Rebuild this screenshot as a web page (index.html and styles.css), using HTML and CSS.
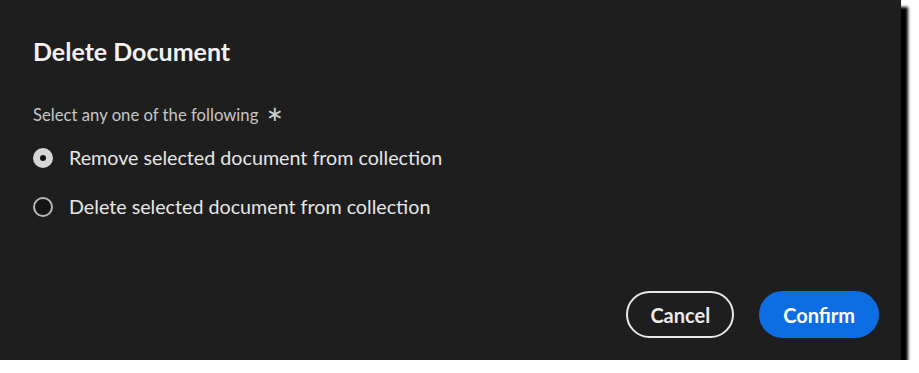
FILE: index.html
```html
<!DOCTYPE html>
<html lang="en">
  <head>
    <meta charset="UTF-8" />
    <meta name="viewport" content="width=device-width, initial-scale=1.0" />
    <title>Delete Document</title>
    <link rel="stylesheet" href="styles.css">
  </head>
  <body>
    <div class="dialog">
      <h2 class="heading">Delete Document</h2>

      <div class="field">
        <div class="label">Select any one of the following <span class="req">∗</span></div>
        <label class="radio">
          <span class="circle checked"></span>
          <span>Remove selected document from collection</span>
        </label>
        <label class="radio">
          <span class="circle"></span>
          <span>Delete selected document from collection</span>
        </label>
      </div>

      <div class="buttons">
        <button class="btn secondary">Cancel</button>
        <button class="btn primary">Confirm</button>
      </div>
    </div>
  </body>
</html>
```

FILE: styles.css
```css
body {
  margin: 0;
  background-color: #ffffff;
  font-family: Lato, "Noto Sans", Arial, sans-serif;
}

.dialog {
  width: 901px;
  height: 360px;
  box-sizing: border-box;
  padding: 35px 22px 22px 33px;
  background-color: #1e1e1e;
  color: #ebebeb;
  box-shadow: 7px 7px 3px #000000;
  display: flex;
  flex-direction: column;
}

.heading {
  margin: 0;
  font-size: 25px;
  font-weight: 700;
  line-height: 32px;
  color: #f2f2f2;
}

.field {
  margin-top: 36px;
  display: flex;
  flex-direction: column;
}

.label {
  font-size: 16.7px;
  line-height: 20px;
  color: #c6c6c6;
}

.label .req {
  margin-left: 3px;
  font-size: 21px;
  color: #d0d0d0;
}

.radio {
  display: flex;
  align-items: center;
  gap: 16px;
  font-size: 19.7px;
  line-height: 24px;
  color: #e6e6e6;
  margin-top: 21px;
}

.radio + .radio {
  margin-top: 25px;
}

.circle {
  width: 20px;
  height: 20px;
  box-sizing: border-box;
  border-radius: 50%;
  border: 2px solid #b8b8b8;
  background-color: #151515;
}

.circle.checked {
  border: 7px solid #d6d6d6;
  background-color: #111111;
}

.buttons {
  margin-top: auto;
  display: flex;
  justify-content: flex-end;
  gap: 25px;
}

.btn {
  height: 47px;
  border-radius: 24px;
  font-family: inherit;
  font-size: 20px;
  font-weight: 700;
  padding: 0 24px;
  cursor: pointer;
}

.btn.secondary {
  background-color: transparent;
  color: #ebebeb;
  border: 2px solid #e8e8e8;
  padding: 0 22px;
}

.btn.primary {
  background-color: #0d6ee3;
  color: #ffffff;
  border: none;
}
```
